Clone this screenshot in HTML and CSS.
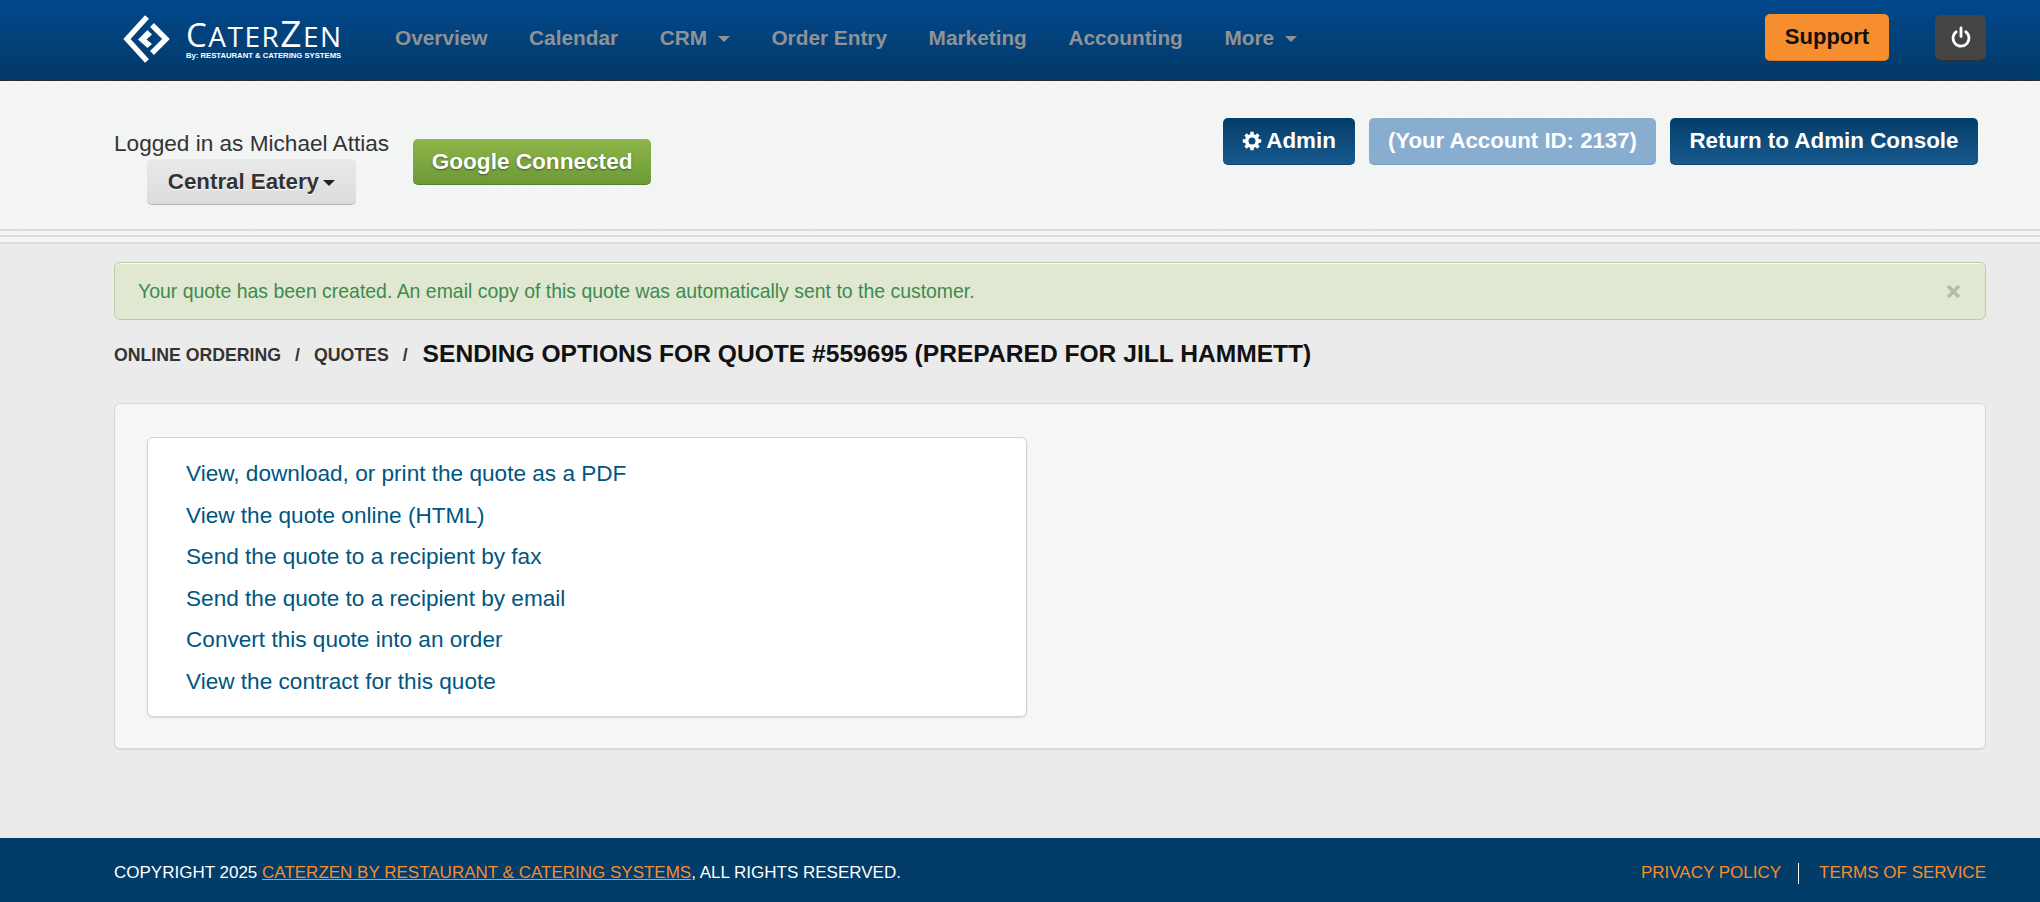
FILE: index.html
```html
<!DOCTYPE html>
<html lang="en">
<head>
<meta charset="utf-8">
<title>CaterZen</title>
<link rel="stylesheet" href="styles.css">
</head>
<body>
<header class="topbar">
  <a class="logo" href="#">
    <svg class="logo-mark" viewBox="0 0 50 50" width="50" height="50">
      <polyline points="24,3 4,25 24,47" fill="none" stroke="#fff" stroke-width="5.4"/>
      <polyline points="29,11 43,25 29,39" fill="none" stroke="#fff" stroke-width="5.4"/>
      <polygon points="24.5,16 15,25.500 24.500,34 29,30 23.500,25.500 29,20.500" fill="#fff"/>
    </svg>
    <span class="logo-text">
      <span class="logo-name">C<small>ATER</small><span class="logo-z">Z</span><small>EN</small></span>
      <span class="logo-tag">By: RESTAURANT &amp; CATERING SYSTEMS</span>
    </span>
  </a>
  <nav class="nav">
    <a href="#">Overview</a>
    <a href="#">Calendar</a>
    <a href="#">CRM <i class="caret"></i></a>
    <a href="#">Order Entry</a>
    <a href="#">Marketing</a>
    <a href="#">Accounting</a>
    <a href="#">More <i class="caret"></i></a>
  </nav>
  <a class="support" href="#">Support</a>
  <a class="power" href="#" aria-label="Log out">
    <svg viewBox="0 0 24 24" width="24" height="24"><path d="M7.200 6.800a8 8 0 1 0 9.600 0" fill="none" stroke="#fff" stroke-width="2.800" stroke-linecap="round"/><path d="M12 3v8.500" fill="none" stroke="#fff" stroke-width="2.800" stroke-linecap="round"/></svg>
  </a>
</header>

<section class="subbar">
  <div class="account">
    <div class="logged">Logged in as Michael Attias</div>
    <button class="btn-grey">Central Eatery <i class="caret caret-dark"></i></button>
  </div>
  <button class="btn-green">Google Connected</button>
  <div class="actions">
    <button class="btn btn-navy btn-admin">
      <svg class="gear" viewBox="0 0 20 20" width="20" height="20">
        <circle cx="10" cy="10" r="5.300" fill="none" stroke="#fff" stroke-width="3.600"/>
        <path d="M10 .8v3.500M10 15.700v3.500M.8 10h3.500M15.700 10h3.500M3.500 3.500l2.500 2.500M14 14l2.500 2.500M3.500 16.500L6 14M14 6l2.500-2.500" stroke="#fff" stroke-width="3.400"/>
      </svg>
      Admin
    </button>
    <button class="btn btn-pale">(Your Account ID: 2137)</button>
    <button class="btn btn-navy">Return to Admin Console</button>
  </div>
</section>
<div class="stripes"></div>

<main class="content">
  <div class="alert">
    <span>Your quote has been created. An email copy of this quote was automatically sent to the customer.</span>
    <svg class="close" viewBox="0 0 15 15" width="15" height="15" aria-label="Close"><path d="M2 2l11 11M13 2L2 13" stroke="#b1bda6" stroke-width="3.600"/></svg>
  </div>
  <div class="crumbs">
    <a href="#">ONLINE ORDERING</a><span class="sep">/</span><a href="#">QUOTES</a><span class="sep">/</span><h1>SENDING OPTIONS FOR QUOTE #559695 (PREPARED FOR JILL HAMMETT)</h1>
  </div>
  <div class="well">
    <ul class="links">
      <li><a href="#">View, download, or print the quote as a PDF</a></li>
      <li><a href="#">View the quote online (HTML)</a></li>
      <li><a href="#">Send the quote to a recipient by fax</a></li>
      <li><a href="#">Send the quote to a recipient by email</a></li>
      <li><a href="#">Convert this quote into an order</a></li>
      <li><a href="#">View the contract for this quote</a></li>
    </ul>
  </div>
</main>

<footer class="footer">
  <div>COPYRIGHT 2025 <a class="under" href="#">CATERZEN BY RESTAURANT &amp; CATERING SYSTEMS</a>, ALL RIGHTS RESERVED.</div>
  <div class="legal"><a href="#">PRIVACY POLICY</a><span class="divider"></span><a href="#">TERMS OF SERVICE</a></div>
</footer>
</body>
</html>
```
FILE: styles.css
```css
* { box-sizing: border-box; }
html, body { margin: 0; height: 100%; }
body {
  display: flex;
  flex-direction: column;
  min-height: 100vh;
  background: #ebebeb;
  color: #333;
  font-family: "Liberation Sans", Arial, sans-serif;
}
a { text-decoration: none; color: inherit; }
button { font-family: inherit; cursor: pointer; }

.topbar {
  display: flex;
  align-items: center;
  height: 81px;
  padding: 0 54px 5px 123px;
  background: linear-gradient(#02488c, #023a68);
  border-bottom: 1px solid #2b2b2b;
}
.logo { display: flex; align-items: center; color: #fff; margin-top: 3px; }
.logo-mark { display: block; flex: none; }
.logo-text { display: flex; flex-direction: column; margin-left: 13px; width: 160px; }
.logo-name { font-family: "Open Sans", sans-serif; font-size: 33px; line-height: 30px; font-weight: 400; letter-spacing: 1.500px; white-space: nowrap; }
.logo-name small { font-size: 28px; }
.logo-z { font-size: 37px; }
.logo-tag { font-size: 7.700px; line-height: 10px; font-weight: 700; white-space: nowrap; }

.nav { display: flex; gap: 41.600px; margin-left: 49px; font-size: 20.800px; font-weight: 700; color: #8f9396; flex: 1; }
.caret { display: inline-block; width: 0; height: 0; margin-left: 5px; vertical-align: 3px; border-top: 6px solid #8f9396; border-left: 6px solid transparent; border-right: 6px solid transparent; }
.caret-dark { border-top-color: #222; margin-left: -2px; }

.support {
  width: 124px; height: 47px; line-height: 45px; text-align: center;
  font-size: 22px; font-weight: 700; color: #111;
  background: #f68d2e; border-radius: 5px; border-bottom: 1px solid #d9791f;
}
.power {
  display: flex; align-items: center; justify-content: center;
  width: 51px; height: 46px; margin-left: 46px;
  background: #444; border-radius: 6px; border-bottom: 1px solid #2e2e2e;
}

.subbar {
  display: flex;
  align-items: flex-start;
  height: 148px;
  padding: 0 62px 0 114px;
  background-color: #f3f4f4;
  background-image: repeating-linear-gradient(45deg, rgba(0,0,0,.005) 0 1px, transparent 1px 3px), repeating-linear-gradient(-45deg, rgba(255,255,255,.2) 0 1px, transparent 1px 4px);
}
.account { display: flex; flex-direction: column; align-items: center; margin-top: 47px; }
.logged { font-size: 22.600px; line-height: 31px; color: #333; white-space: nowrap; }
.btn-grey {
  height: 46px; width: 209px; padding: 0; border: 0; border-bottom: 1px solid #b5b5b5; border-radius: 5px;
  font-size: 22.300px; font-weight: 700; color: #333; background: linear-gradient(#e9e9e9, #dcdcdc);
  text-shadow: 0 1px 1px #fff;
}
.btn-green {
  height: 46px; width: 238px; margin: 58px 0 0 24px; padding: 0; border: 0; border-bottom: 1px solid #557f2c; border-radius: 5px;
  font-size: 22.600px; font-weight: 700; color: #fff; background: linear-gradient(#8fb548, #6b9a38);
  text-shadow: 0 1px 2px rgba(0,0,0,.45);
}
.actions { display: flex; gap: 14px; margin: 37px 0 0 auto; }
.btn { height: 47px; padding: 0 19.500px; border: 0; border-radius: 5px; font-size: 22.400px; font-weight: 700; color: #fff; white-space: nowrap; display: flex; align-items: center; }
.btn-navy { background: linear-gradient(#033d69, #19598e); border-bottom: 1px solid #0f466f; }
.btn-pale { padding: 0 19px; font-size: 22.200px; background: #89adce; border-bottom: 1px solid #7b9fc0; }
.gear { margin-right: 4px; }
.btn-admin { padding: 0 19px; }

.stripes {
  height: 15px;
  background: linear-gradient(#dcdcdc 0 2px, #f4f4f4 2px 6px, #dcdcdc 6px 8px, #f4f4f4 8px 13px, #dcdcdc 13px 15px);
}

.content { flex: 1; padding: 18px 54px 0 114px; }
.alert {
  display: flex; align-items: center; justify-content: space-between;
  height: 58px; padding: 0 24px 0 23px;
  background: #e0e8d2; border: 1px solid #bccba4; border-radius: 6px;
  font-size: 19.450px; color: #3d8a4e;
  box-shadow: inset 0 1px 0 #f6f8f1;
}
.crumbs { display: flex; align-items: center; height: 30px; margin-top: 20px; font-size: 17.700px; font-weight: 700; color: #333; white-space: nowrap; }
.sep { margin: 0 14px; }
.crumbs h1 { margin: -3px 0 0 1px; font-size: 24.600px; line-height: 30px; font-weight: 700; color: #111; }

.well {
  margin-top: 33px; padding: 33px 32px;
  height: 346px;
  background: #f6f6f6; border: 1px solid #d8d8d8; border-radius: 6px;
  box-shadow: 0 1px 1px rgba(0,0,0,.08);
}
.links {
  list-style: none; margin: 0; padding: 15px 38px;
  width: 880px; height: 280px;
  background: #fff; border: 1px solid #d4d4d4; border-radius: 6px;
  box-shadow: 0 1px 2px rgba(0,0,0,.12);
  font-size: 22.600px; line-height: 41.600px; color: #00567f;
}

.footer {
  display: flex; align-items: center; justify-content: space-between;
  height: 64px; flex: none; padding: 6px 54px 0 114px;
  background: #023c68; color: #fff; font-size: 17px;
}
.under { color: #f68d2e; text-decoration: underline; }
.legal { display: flex; align-items: center; color: #f68d2e; }
.divider { width: 1px; height: 21px; margin: 0 20px 0 17px; background: #fff; }
```
